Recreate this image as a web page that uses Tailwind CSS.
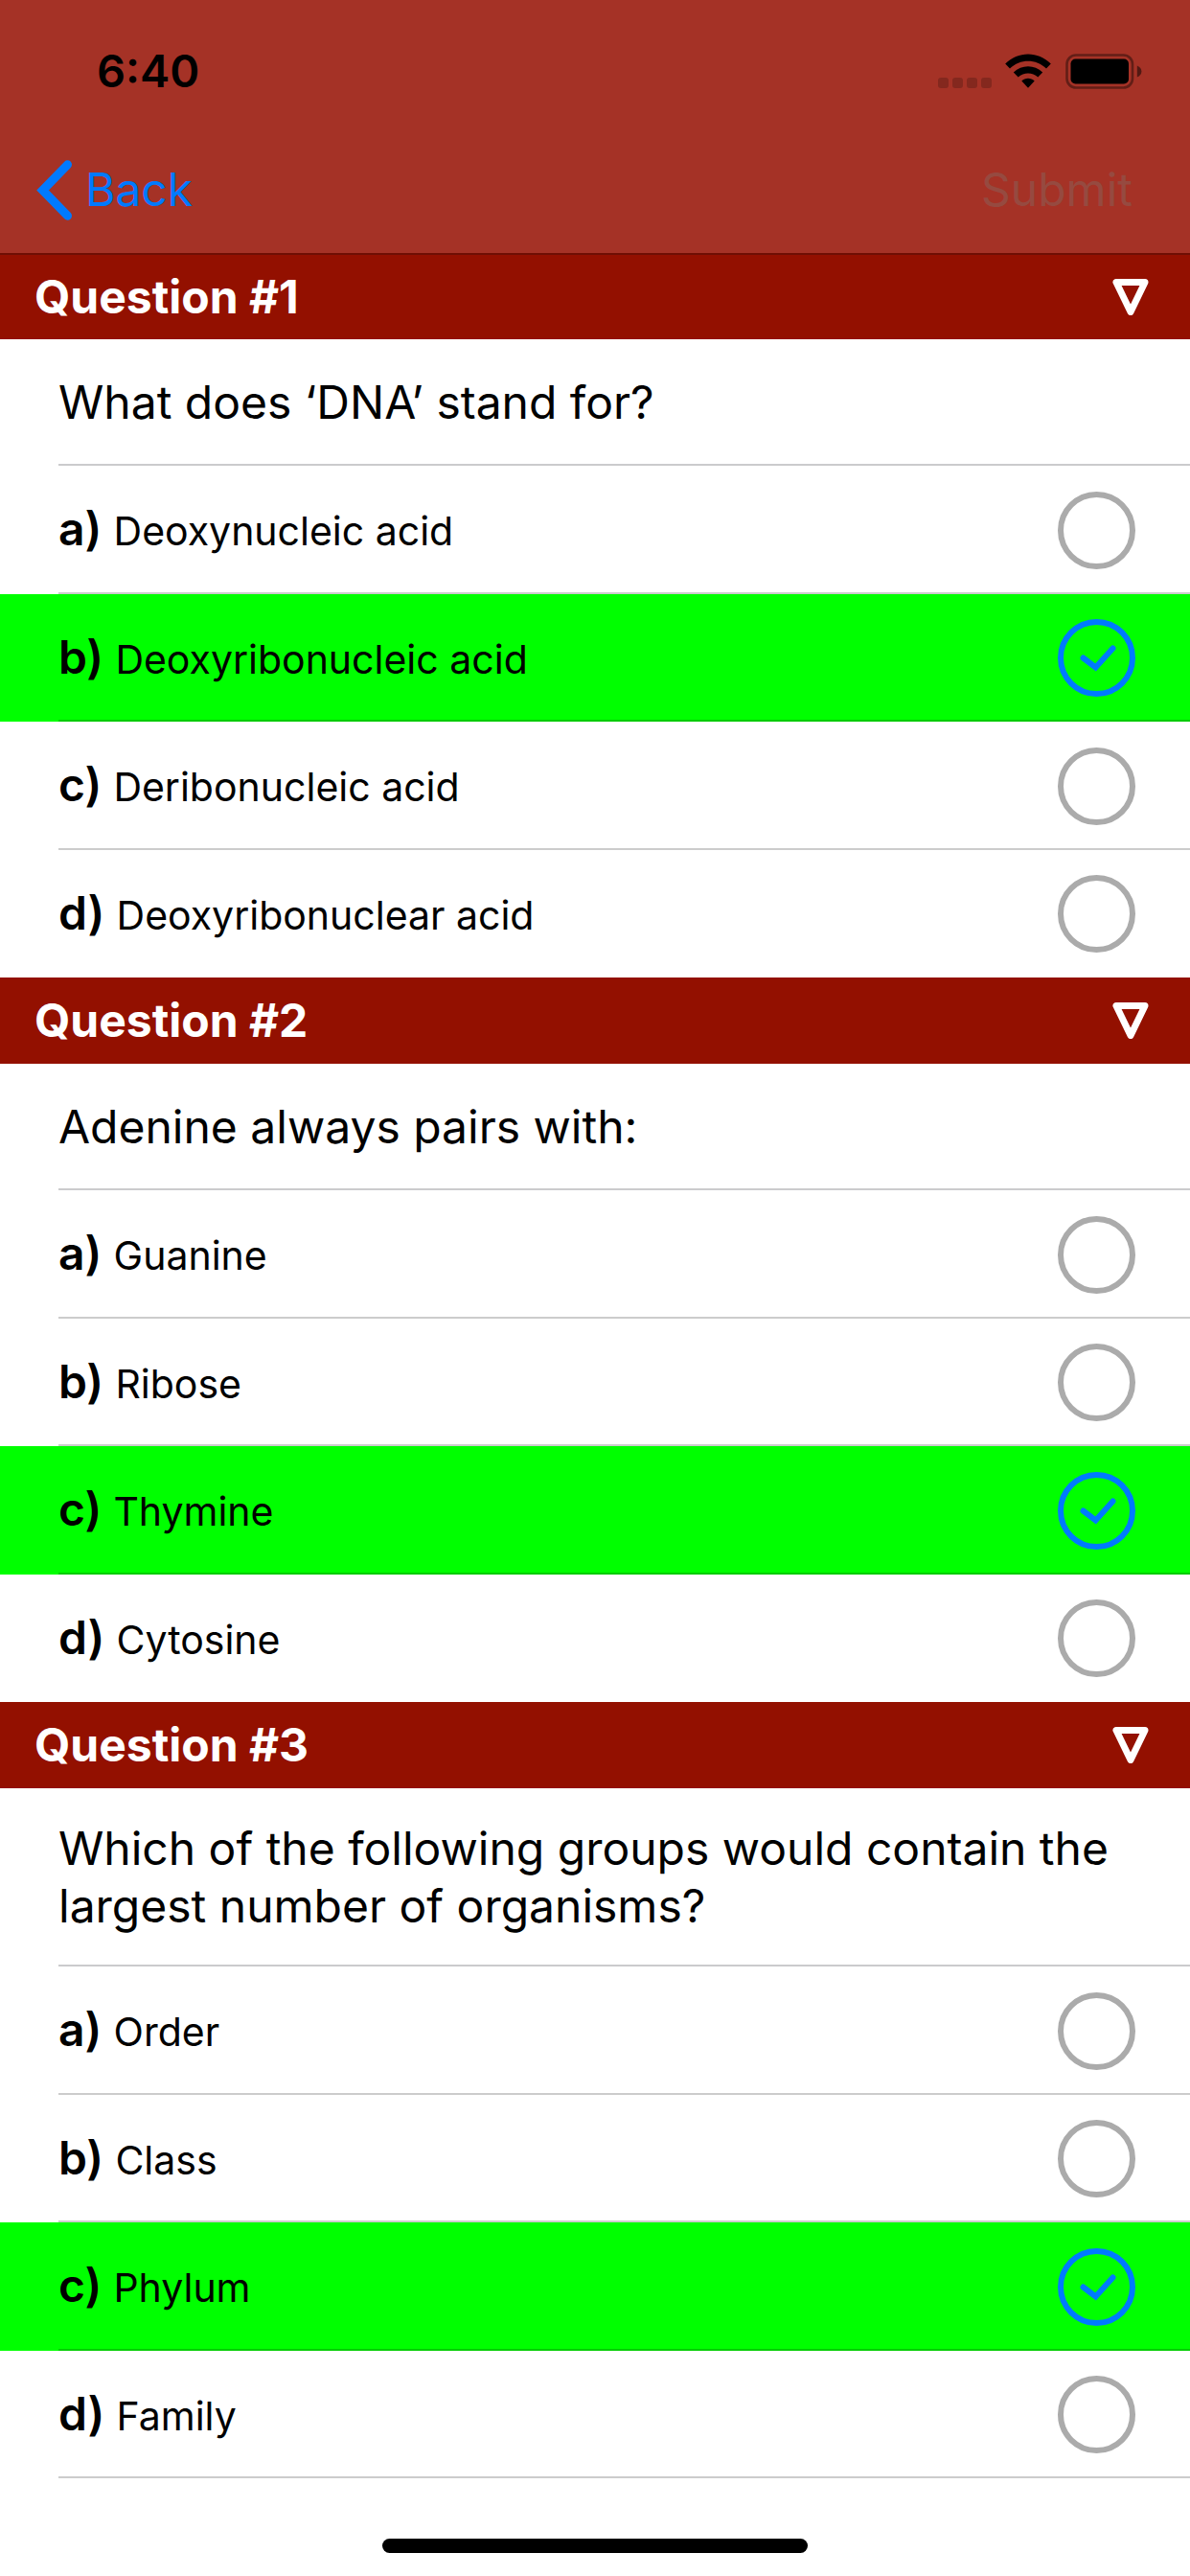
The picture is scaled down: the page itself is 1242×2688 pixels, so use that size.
<!DOCTYPE html>
<html lang="en">
<head>
<meta charset="utf-8">
<meta name="viewport" content="width=device-width, initial-scale=1">
<title>Quiz</title>
<script src="https://cdn.jsdelivr.net/npm/@tailwindcss/browser@4"></script>
</head>
<body class="min-h-screen bg-white font-['Inter',sans-serif] text-black">

<header class="bg-[#a53226]">
  <!-- Status bar -->
  <div class="flex h-[132px] items-center justify-between pt-4 pr-[50px] pl-[101px]">
    <span class="text-[47px] leading-[60px] font-semibold">6:40</span>
    <div class="flex items-center">
      <svg class="mr-3.5 h-[37px] w-14" viewBox="0 0 56 37" fill="#000" fill-opacity=".2" aria-label="No signal">
        <rect x="0" y="25" width="11" height="11" rx="3"/><rect x="15" y="25" width="11" height="11" rx="3"/><rect x="30" y="25" width="11" height="11" rx="3"/><rect x="45" y="25" width="11" height="11" rx="3"/>
      </svg>
      <svg class="mr-[15px] h-[37px] w-12" viewBox="0 0 48 37" aria-label="Wi-Fi">
        <path d="M.200 10.500C13.500-3 34.500-3 47.800 10.500L43 15.500C32.500 5 15.500 5 5 15.500Z"/>
        <path d="M8.800 19.500C17.500 11 30.500 11 39.200 19.500L34.300 24.500C28.500 19 19.500 19 13.700 24.500Z"/>
        <path d="M17.300 28.500C21 24.800 27 24.800 30.700 28.500L24 35.800Z"/>
      </svg>
      <svg class="h-[37px] w-20" viewBox="0 0 80 37" aria-label="Battery full">
        <rect x="1.500" y="1.500" width="68.500" height="34" rx="9.500" fill="none" stroke="#000" stroke-opacity=".4" stroke-width="2.600"/>
        <rect x="5.500" y="5.500" width="60.500" height="26" rx="5"/>
        <path d="M74.800 12.500q4.600 2 4.600 6t-4.600 6z" fill-opacity=".5"/>
      </svg>
    </div>
  </div>
  <!-- Navigation bar -->
  <nav class="flex h-[132px] items-center justify-between pr-[60px] pl-[38px] text-5xl leading-[60px]">
    <a href="#" class="flex items-center gap-[13px] text-[#007aff]">
      <svg class="h-[63px] w-[38px]" viewBox="0 0 38 63" fill="none" stroke="#007aff" stroke-width="9" stroke-linecap="round"><path d="M32.500 4.800L6.500 31.500L32.500 58.200"/></svg>
      <span>Back</span>
    </a>
    <button type="button" disabled class="text-[#964a40]">Submit</button>
  </nav>
</header>

<main class="border-t-2 border-[#6f0f04]">
  <section>
    <div class="flex h-[88px] items-center justify-between bg-[#931000] pr-[43px] pl-9 text-white">
      <h2 id="h1" class="text-5xl leading-[60px] font-bold">Question #1</h2>
      <button type="button" aria-label="Collapse question 1"><svg class="size-[38px]" viewBox="0 0 38 38" fill="none" stroke="#fff" stroke-width="7" stroke-linejoin="round"><path d="M4 3.500H34L19 34.500Z"/></svg></button>
    </div>
    <div role="radiogroup" aria-labelledby="h1">
      <div class="ml-[61px] border-y-2 border-t-transparent border-b-[#cbcbcd] py-[34px] pr-[60px]">
        <p class="text-5xl leading-[60px]">What does ‘DNA’ stand for?</p>
      </div>
      <div>
        <label class="block h-[134px] pl-[61px] has-checked:bg-[#00ff00] nth-[even]:h-[133px]">
          <span class="flex h-full items-center justify-between border-y-2 border-t-transparent border-b-black/20 pr-[57px]">
            <span class="text-[41px] leading-[60px]"><b class="text-5xl leading-[60px] font-semibold">a) </b>Deoxynucleic acid</span>
            <span class="grid place-items-center"><input type="radio" name="q1" class="peer col-start-1 row-start-1 size-[81px] appearance-none rounded-full border-6 border-[#ababab] checked:border-[#007aff]"><svg class="invisible col-start-1 row-start-1 size-[81px] peer-checked:visible" viewBox="0 0 81 81" fill="none" stroke="#007aff" stroke-width="6" stroke-linecap="round"><path d="M26.500 40.500L39.500 50.500L57.500 30.500"/></svg></span>
          </span>
        </label>
        <label class="block h-[134px] pl-[61px] has-checked:bg-[#00ff00] nth-[even]:h-[133px]">
          <span class="flex h-full items-center justify-between border-y-2 border-t-transparent border-b-black/20 pr-[57px]">
            <span class="text-[41px] leading-[60px]"><b class="text-5xl leading-[60px] font-semibold">b) </b>Deoxyribonucleic acid</span>
            <span class="grid place-items-center"><input type="radio" name="q1" checked class="peer col-start-1 row-start-1 size-[81px] appearance-none rounded-full border-6 border-[#ababab] checked:border-[#007aff]"><svg class="invisible col-start-1 row-start-1 size-[81px] peer-checked:visible" viewBox="0 0 81 81" fill="none" stroke="#007aff" stroke-width="6" stroke-linecap="round"><path d="M26.500 40.500L39.500 50.500L57.500 30.500"/></svg></span>
          </span>
        </label>
        <label class="block h-[134px] pl-[61px] has-checked:bg-[#00ff00] nth-[even]:h-[133px]">
          <span class="flex h-full items-center justify-between border-y-2 border-t-transparent border-b-black/20 pr-[57px]">
            <span class="text-[41px] leading-[60px]"><b class="text-5xl leading-[60px] font-semibold">c) </b>Deribonucleic acid</span>
            <span class="grid place-items-center"><input type="radio" name="q1" class="peer col-start-1 row-start-1 size-[81px] appearance-none rounded-full border-6 border-[#ababab] checked:border-[#007aff]"><svg class="invisible col-start-1 row-start-1 size-[81px] peer-checked:visible" viewBox="0 0 81 81" fill="none" stroke="#007aff" stroke-width="6" stroke-linecap="round"><path d="M26.500 40.500L39.500 50.500L57.500 30.500"/></svg></span>
          </span>
        </label>
        <label class="block h-[134px] pl-[61px] has-checked:bg-[#00ff00] nth-[even]:h-[133px]">
          <span class="flex h-full items-center justify-between border-y-2 border-transparent pr-[57px]">
            <span class="text-[41px] leading-[60px]"><b class="text-5xl leading-[60px] font-semibold">d) </b>Deoxyribonuclear acid</span>
            <span class="grid place-items-center"><input type="radio" name="q1" class="peer col-start-1 row-start-1 size-[81px] appearance-none rounded-full border-6 border-[#ababab] checked:border-[#007aff]"><svg class="invisible col-start-1 row-start-1 size-[81px] peer-checked:visible" viewBox="0 0 81 81" fill="none" stroke="#007aff" stroke-width="6" stroke-linecap="round"><path d="M26.500 40.500L39.500 50.500L57.500 30.500"/></svg></span>
          </span>
        </label>
      </div>
    </div>
  </section>

  <section>
    <div class="flex h-[90px] items-center justify-between bg-[#931000] pr-[43px] pl-9 text-white">
      <h2 id="h2" class="text-5xl leading-[60px] font-bold">Question #2</h2>
      <button type="button" aria-label="Collapse question 2"><svg class="size-[38px]" viewBox="0 0 38 38" fill="none" stroke="#fff" stroke-width="7" stroke-linejoin="round"><path d="M4 3.500H34L19 34.500Z"/></svg></button>
    </div>
    <div role="radiogroup" aria-labelledby="h2">
      <div class="ml-[61px] border-y-2 border-t-transparent border-b-[#cbcbcd] py-[34px] pr-[60px]">
        <p class="text-5xl leading-[60px]">Adenine always pairs with:</p>
      </div>
      <div>
        <label class="block h-[134px] pl-[61px] has-checked:bg-[#00ff00] nth-[even]:h-[133px]">
          <span class="flex h-full items-center justify-between border-y-2 border-t-transparent border-b-black/20 pr-[57px]">
            <span class="text-[41px] leading-[60px]"><b class="text-5xl leading-[60px] font-semibold">a) </b>Guanine</span>
            <span class="grid place-items-center"><input type="radio" name="q2" class="peer col-start-1 row-start-1 size-[81px] appearance-none rounded-full border-6 border-[#ababab] checked:border-[#007aff]"><svg class="invisible col-start-1 row-start-1 size-[81px] peer-checked:visible" viewBox="0 0 81 81" fill="none" stroke="#007aff" stroke-width="6" stroke-linecap="round"><path d="M26.500 40.500L39.500 50.500L57.500 30.500"/></svg></span>
          </span>
        </label>
        <label class="block h-[134px] pl-[61px] has-checked:bg-[#00ff00] nth-[even]:h-[133px]">
          <span class="flex h-full items-center justify-between border-y-2 border-t-transparent border-b-black/20 pr-[57px]">
            <span class="text-[41px] leading-[60px]"><b class="text-5xl leading-[60px] font-semibold">b) </b>Ribose</span>
            <span class="grid place-items-center"><input type="radio" name="q2" class="peer col-start-1 row-start-1 size-[81px] appearance-none rounded-full border-6 border-[#ababab] checked:border-[#007aff]"><svg class="invisible col-start-1 row-start-1 size-[81px] peer-checked:visible" viewBox="0 0 81 81" fill="none" stroke="#007aff" stroke-width="6" stroke-linecap="round"><path d="M26.500 40.500L39.500 50.500L57.500 30.500"/></svg></span>
          </span>
        </label>
        <label class="block h-[134px] pl-[61px] has-checked:bg-[#00ff00] nth-[even]:h-[133px]">
          <span class="flex h-full items-center justify-between border-y-2 border-t-transparent border-b-black/20 pr-[57px]">
            <span class="text-[41px] leading-[60px]"><b class="text-5xl leading-[60px] font-semibold">c) </b>Thymine</span>
            <span class="grid place-items-center"><input type="radio" name="q2" checked class="peer col-start-1 row-start-1 size-[81px] appearance-none rounded-full border-6 border-[#ababab] checked:border-[#007aff]"><svg class="invisible col-start-1 row-start-1 size-[81px] peer-checked:visible" viewBox="0 0 81 81" fill="none" stroke="#007aff" stroke-width="6" stroke-linecap="round"><path d="M26.500 40.500L39.500 50.500L57.500 30.500"/></svg></span>
          </span>
        </label>
        <label class="block h-[134px] pl-[61px] has-checked:bg-[#00ff00] nth-[even]:h-[133px]">
          <span class="flex h-full items-center justify-between border-y-2 border-transparent pr-[57px]">
            <span class="text-[41px] leading-[60px]"><b class="text-5xl leading-[60px] font-semibold">d) </b>Cytosine</span>
            <span class="grid place-items-center"><input type="radio" name="q2" class="peer col-start-1 row-start-1 size-[81px] appearance-none rounded-full border-6 border-[#ababab] checked:border-[#007aff]"><svg class="invisible col-start-1 row-start-1 size-[81px] peer-checked:visible" viewBox="0 0 81 81" fill="none" stroke="#007aff" stroke-width="6" stroke-linecap="round"><path d="M26.500 40.500L39.500 50.500L57.500 30.500"/></svg></span>
          </span>
        </label>
      </div>
    </div>
  </section>

  <section>
    <div class="flex h-[90px] items-center justify-between bg-[#931000] pr-[43px] pl-9 text-white">
      <h2 id="h3" class="text-5xl leading-[60px] font-bold">Question #3</h2>
      <button type="button" aria-label="Collapse question 3"><svg class="size-[38px]" viewBox="0 0 38 38" fill="none" stroke="#fff" stroke-width="7" stroke-linejoin="round"><path d="M4 3.500H34L19 34.500Z"/></svg></button>
    </div>
    <div role="radiogroup" aria-labelledby="h3">
      <div class="ml-[61px] border-y-2 border-t-transparent border-b-[#cbcbcd] py-[31px] pr-[60px]">
        <p class="text-5xl leading-[60px]">Which of the following groups would contain the largest number of organisms?</p>
      </div>
      <div>
        <label class="block h-[134px] pl-[61px] has-checked:bg-[#00ff00] nth-[even]:h-[133px]">
          <span class="flex h-full items-center justify-between border-y-2 border-t-transparent border-b-black/20 pr-[57px]">
            <span class="text-[41px] leading-[60px]"><b class="text-5xl leading-[60px] font-semibold">a) </b>Order</span>
            <span class="grid place-items-center"><input type="radio" name="q3" class="peer col-start-1 row-start-1 size-[81px] appearance-none rounded-full border-6 border-[#ababab] checked:border-[#007aff]"><svg class="invisible col-start-1 row-start-1 size-[81px] peer-checked:visible" viewBox="0 0 81 81" fill="none" stroke="#007aff" stroke-width="6" stroke-linecap="round"><path d="M26.500 40.500L39.500 50.500L57.500 30.500"/></svg></span>
          </span>
        </label>
        <label class="block h-[134px] pl-[61px] has-checked:bg-[#00ff00] nth-[even]:h-[133px]">
          <span class="flex h-full items-center justify-between border-y-2 border-t-transparent border-b-black/20 pr-[57px]">
            <span class="text-[41px] leading-[60px]"><b class="text-5xl leading-[60px] font-semibold">b) </b>Class</span>
            <span class="grid place-items-center"><input type="radio" name="q3" class="peer col-start-1 row-start-1 size-[81px] appearance-none rounded-full border-6 border-[#ababab] checked:border-[#007aff]"><svg class="invisible col-start-1 row-start-1 size-[81px] peer-checked:visible" viewBox="0 0 81 81" fill="none" stroke="#007aff" stroke-width="6" stroke-linecap="round"><path d="M26.500 40.500L39.500 50.500L57.500 30.500"/></svg></span>
          </span>
        </label>
        <label class="block h-[134px] pl-[61px] has-checked:bg-[#00ff00] nth-[even]:h-[133px]">
          <span class="flex h-full items-center justify-between border-y-2 border-t-transparent border-b-black/20 pr-[57px]">
            <span class="text-[41px] leading-[60px]"><b class="text-5xl leading-[60px] font-semibold">c) </b>Phylum</span>
            <span class="grid place-items-center"><input type="radio" name="q3" checked class="peer col-start-1 row-start-1 size-[81px] appearance-none rounded-full border-6 border-[#ababab] checked:border-[#007aff]"><svg class="invisible col-start-1 row-start-1 size-[81px] peer-checked:visible" viewBox="0 0 81 81" fill="none" stroke="#007aff" stroke-width="6" stroke-linecap="round"><path d="M26.500 40.500L39.500 50.500L57.500 30.500"/></svg></span>
          </span>
        </label>
        <label class="block h-[134px] pl-[61px] has-checked:bg-[#00ff00] nth-[even]:h-[133px]">
          <span class="flex h-full items-center justify-between border-y-2 border-t-transparent border-b-black/20 pr-[57px]">
            <span class="text-[41px] leading-[60px]"><b class="text-5xl leading-[60px] font-semibold">d) </b>Family</span>
            <span class="grid place-items-center"><input type="radio" name="q3" class="peer col-start-1 row-start-1 size-[81px] appearance-none rounded-full border-6 border-[#ababab] checked:border-[#007aff]"><svg class="invisible col-start-1 row-start-1 size-[81px] peer-checked:visible" viewBox="0 0 81 81" fill="none" stroke="#007aff" stroke-width="6" stroke-linecap="round"><path d="M26.500 40.500L39.500 50.500L57.500 30.500"/></svg></span>
          </span>
        </label>
      </div>
    </div>
  </section>
</main>

<!-- Home indicator -->
<footer class="flex justify-center pt-[63px] pb-6">
  <div class="h-[15px] w-[444px] rounded-full bg-black"></div>
</footer>

</body>
</html>
